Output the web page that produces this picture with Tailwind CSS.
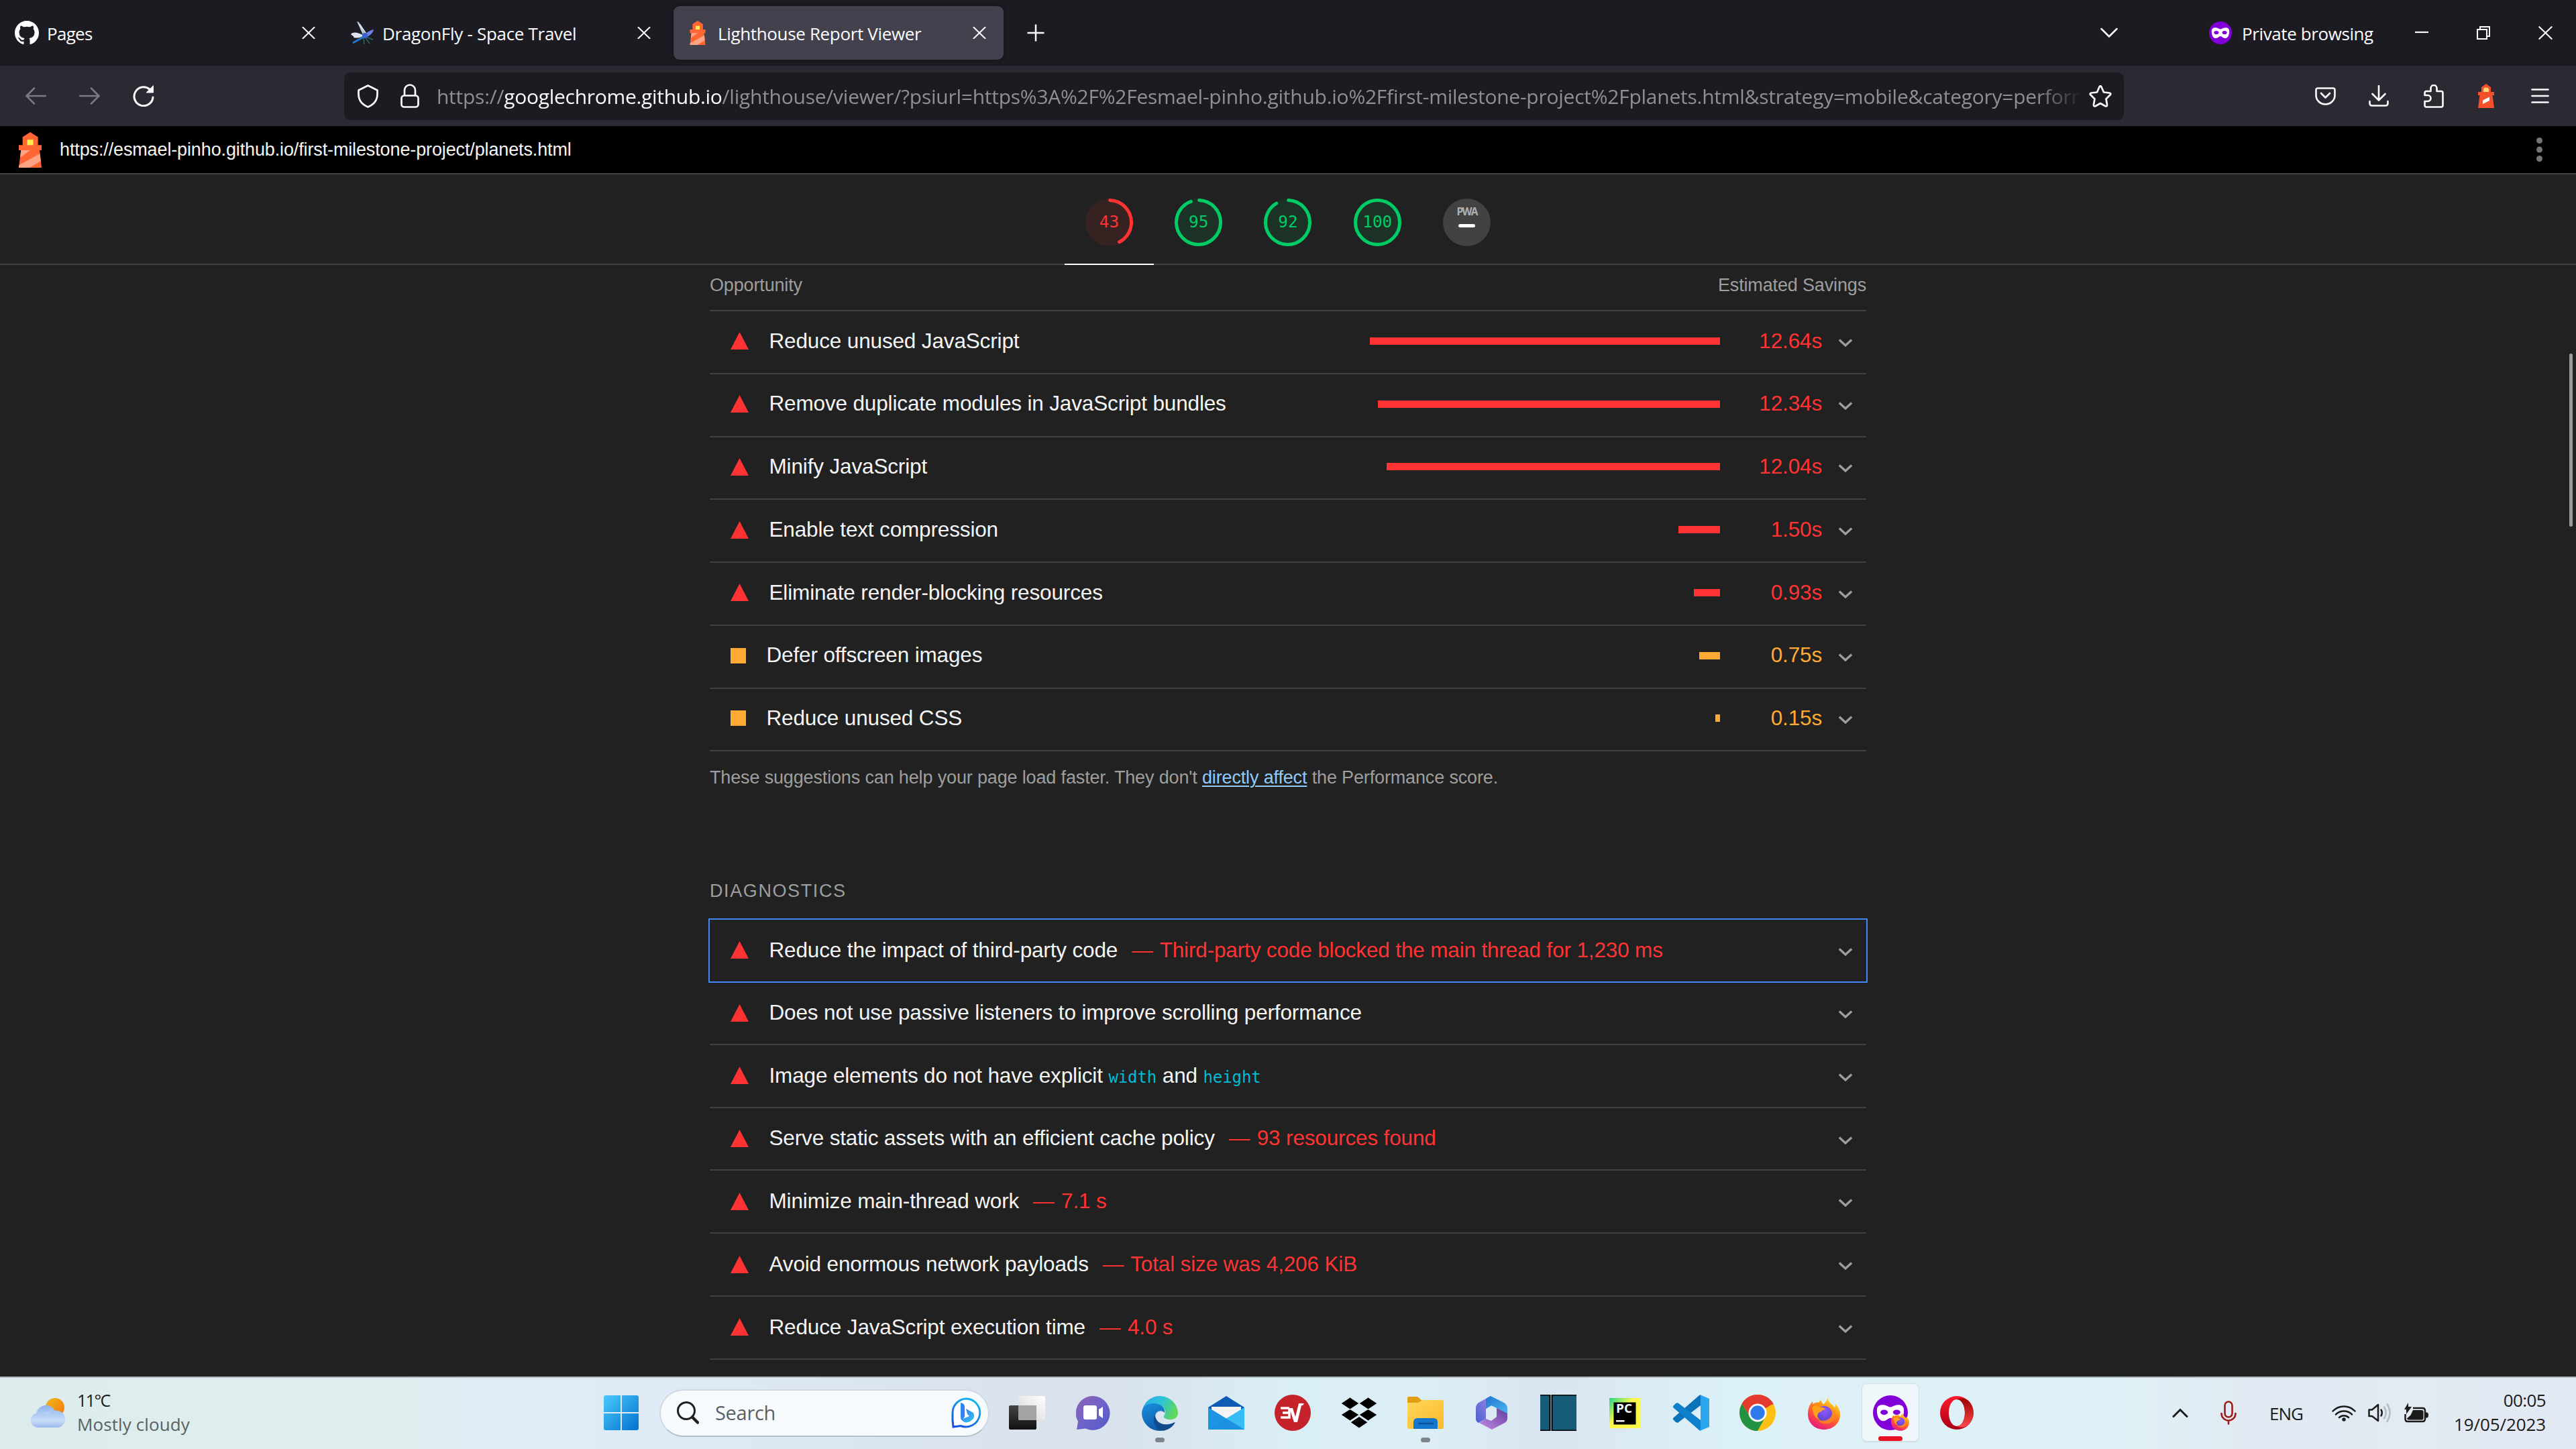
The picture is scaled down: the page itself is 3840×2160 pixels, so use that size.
<!DOCTYPE html>
<html lang="en">
<head>
<meta charset="utf-8">
<title>Lighthouse Report Viewer</title>
<script src="https://cdn.jsdelivr.net/npm/@tailwindcss/browser@4"></script>
</head>
<body class="w-[3840px] h-[2160px] overflow-hidden bg-[#212121] flex flex-col relative font-['Open_Sans',sans-serif]">

<svg class="absolute w-0 h-0">
  <defs>
    <symbol id="lighthouse" viewBox="0 0 34 53">
      <path fill="#ff6633" d="M17 0 28.6 7.3V19.3H34V27H31L34 53H0L3.3 27H0V19.3H5.7V7.3Z"/>
      <path fill="#ffa385" d="M3.3 27H17L2 38ZM31.6 32 32.8 43 16 53H0L.5 49Z"/>
      <path fill="#fff04d" d="M12.5 11.3H21.5V19.3H12.5Z"/>
    </symbol>
    <symbol id="x" viewBox="0 0 20 18"><path d="M1.5 .8 18.5 17.2M18.5 .8 1.5 17.2" stroke="#fbfbfe" stroke-width="2" stroke-linecap="round"/></symbol>
    <symbol id="mask" viewBox="0 0 40 40">
      <circle cx="20" cy="20" r="20" fill="#8000d7"/>
      <path fill="#fff" d="M4.5 17C4.500 12 8 10.500 12 11C16 11.300 17.500 13.500 20 13.500S24 11.300 28 11C32 10.500 35.500 12 35.500 17C35.500 24 33 29.500 28 29.500C24 29.500 23 26 20 26S16 29.500 12 29.500C7 29.500 4.500 24 4.500 17Z"/>
      <ellipse cx="12.800" cy="19.500" rx="4.200" ry="3" fill="#8000d7"/><ellipse cx="27.200" cy="19.500" rx="4.200" ry="3" fill="#8000d7"/>
    </symbol>
    <linearGradient id="ffbody" x1=".8" y1="0" x2=".25" y2="1"><stop offset="0" stop-color="#fff44f"/><stop offset=".35" stop-color="#ff980e"/><stop offset=".65" stop-color="#ff4f3c"/><stop offset="1" stop-color="#e31587"/></linearGradient>
    <radialGradient id="ffglobe" cx=".55" cy=".3" r=".8"><stop offset="0" stop-color="#9059ff"/><stop offset="1" stop-color="#5a3fc4"/></radialGradient>
    <symbol id="firefox" viewBox="0 0 48 49">
      <path fill="url(#ffbody)" d="M31 0C29 4 31 7 35 11C37 13 39 14 40 16C41 14 41 12 40.500 10.500C45 14 48 20 48 27C48 40 37 49 24 49S0 40 0 26C0 19 2 12 7 7C7 9 7 10 8 11C10 9 13 8 16 9C17 7 18 6 20 5C20 8 21 10 24 11C27 8 28 4 31 0Z"/>
      <circle cx="24.500" cy="25.500" r="11.500" fill="url(#ffglobe)"/>
      <path fill="#ffa11a" d="M7 15C11 12 15 13 18 16C21 15 24 17 26 18C24 20 21 20 20 22C18 23 16 23 15 26C13 29 15 32 18 34C13 33 9 29 8 24C7 21 6 18 7 15Z"/>
      <path fill="#ff8a1f" d="M16 34C24 38 34 34 36 26C37 20 34 16 31 14C38 17 42 24 40 32C37 40 26 43 18 38Z" opacity=".8"/>
    </symbol>
    <linearGradient id="winA" x1="0" y1="0" x2="1" y2="1"><stop offset="0" stop-color="#4cc9fb"/><stop offset="1" stop-color="#0172cf"/></linearGradient>
  </defs>
</svg>

<!-- Tab strip -->
<header class="h-[98px] shrink-0 bg-[#1c1b22] flex items-center pl-1 pr-[35px] text-[#fbfbfe] text-[26px] tracking-[-0.3px] leading-none">
  <div class="flex gap-2">
    <div class="w-[492px] h-20 flex items-center pl-[18px] pr-[26px]">
      <svg class="w-9 h-9" viewBox="0 0 16 16" fill="#fff"><path d="M8 0C3.580 0 0 3.580 0 8c0 3.540 2.290 6.530 5.470 7.590.4.070.55-.17.55-.38 0-.19-.01-.82-.01-1.490-2.010.37-2.530-.49-2.690-.94-.09-.23-.48-.94-.82-1.130-.28-.15-.68-.52-.01-.53.63-.01 1.080.58 1.230.82.72 1.210 1.870.87 2.330.66.07-.52.28-.87.51-1.070-1.780-.2-3.640-.89-3.640-3.950 0-.87.31-1.590.82-2.150-.08-.2-.36-1.020.08-2.120 0 0 .67-.21 2.200.82.64-.18 1.320-.27 2-.27s1.360.09 2 .27c1.530-1.040 2.200-.82 2.200-.82.44 1.100.16 1.920.08 2.120.51.56.82 1.270.82 2.150 0 3.070-1.870 3.750-3.650 3.950.29.25.54.73.54 1.480 0 1.070-.01 1.930-.01 2.200 0 .21.15.46.55.38A8.010 8.010 0 0 0 16 8c0-4.420-3.580-8-8-8"/></svg>
      <span class="ml-3 pt-[2px] grow tracking-[-0.7px]">Pages</span>
      <svg class="w-5 h-[18px]"><use href="#x"/></svg>
    </div>
    <div class="w-[492px] h-20 flex items-center pl-[18px] pr-[26px]">
      <svg class="w-9 h-9" viewBox="0 0 36 36" fill="none">
        <path d="M10 1 13 2 23 22 20 23Z" fill="#b9c9d6"/><path d="M14 5 24 20" stroke="#dfe9ef" stroke-width="2"/>
        <path d="M1 20C4 16 12 17 20 22C15 26 10 26 5 25C7 23 2 22 1 20Z" fill="#dce4f2"/>
        <path d="M19 23C23 18 30 14 35 13C34 19 28 23 22 25Z" fill="#6f7fe8"/>
        <path d="M20 24 4 33" stroke="#2277c8" stroke-width="3"/><path d="M22 24 29 34M20 25 21 35M24 24 34 28" stroke="#2b6a66" stroke-width="1.500"/>
        <circle cx="22" cy="22" r="4" fill="#3a63d0"/>
      </svg>
      <span class="ml-3 pt-[2px] grow">DragonFly - Space Travel</span>
      <svg class="w-5 h-[18px]"><use href="#x"/></svg>
    </div>
    <div class="w-[492px] h-20 flex items-center pl-[18px] pr-[26px] bg-[#42414d] rounded-[9px] shadow-[0_0_5px_rgba(0,0,0,0.5)]">
      <svg class="w-9 h-9"><use href="#lighthouse"/></svg>
      <span class="ml-3 pt-[2px] grow tracking-[-0.35px]">Lighthouse Report Viewer</span>
      <svg class="w-5 h-[18px]"><use href="#x"/></svg>
    </div>
  </div>
  <svg class="ml-[35px] w-[26px] h-[26px]" viewBox="0 0 26 26"><path d="M13 .5V25.500M.5 13H25.500" stroke="#fbfbfe" stroke-width="2.500"/></svg>
  <svg class="ml-auto w-[26px] h-4" viewBox="0 0 26 16"><path d="M1.500 2 13 13.500 24.500 2" fill="none" stroke="#fbfbfe" stroke-width="2.500" stroke-linecap="round"/></svg>
  <svg class="ml-[136px] w-[34px] h-[34px]"><use href="#mask"/></svg>
  <span class="ml-[15px] w-[200px] pt-[1px] tracking-[-0.4px] whitespace-nowrap">Private browsing</span>
  <svg class="ml-[58px] w-5 h-5" viewBox="0 0 20 20"><path d="M0 9H20" stroke="#fff" stroke-width="2.200"/></svg>
  <svg class="ml-[72px] w-5 h-5" viewBox="0 0 20 20" fill="none" stroke="#fff" stroke-width="2"><path d="M1 5H15V19H1ZM5 5V1H19V15H15"/></svg>
  <svg class="ml-[72px] w-[21px] h-5" viewBox="0 0 21 20"><path d="M.7 .5 20.300 19.500M20.300 .5 .7 19.500" stroke="#fff" stroke-width="2"/></svg>
</header>

<!-- Navigation toolbar -->
<div class="h-[90px] shrink-0 bg-[#2b2a33] flex items-center pl-[38px] pr-10">
  <svg class="w-[31px] h-[26px]" viewBox="0 0 31 26" fill="none" stroke="#7c7b82" stroke-width="2.500" stroke-linecap="round"><path d="M30 13H2M13 1.500 1.500 13 13 24.500"/></svg>
  <svg class="ml-[49px] w-[31px] h-[26px]" viewBox="0 0 31 26" fill="none" stroke="#7c7b82" stroke-width="2.500" stroke-linecap="round"><path d="M1 13H29M18 1.500 29.500 13 18 24.500"/></svg>
  <svg class="ml-[49px] w-8 h-8" viewBox="0 0 32 32" fill="none" stroke="#fbfbfe" stroke-width="3" stroke-linecap="round"><path d="M30 18A14 14 0 1 1 25 6L28 9"/><path d="M30.500 1V11H20.500Z" fill="#fbfbfe" stroke-width="1"/></svg>
  <div class="ml-[283px] w-[2654px] h-[71px] rounded-[9px] bg-[#1c1b22] flex items-center pl-5 pr-[18px]">
    <svg class="w-[31px] h-[35px]" viewBox="0 0 31 35" fill="none" stroke="#fbfbfe" stroke-width="2.700" stroke-linejoin="round"><path d="M15.500 1.500 29.500 8.500V14C29.500 23 24 30 15.500 33.500C7 30 1.500 23 1.500 14V8.500Z"/></svg>
    <svg class="ml-[33px] w-7 h-9" viewBox="0 0 28 36" fill="none" stroke="#fbfbfe" stroke-width="2.700"><rect x="1.500" y="17.500" width="25" height="17" rx="4"/><path d="M6 17V9.500A8 8 0 0 1 22 9.500V17"/></svg>
    <div class="ml-[26px] w-[2448px] overflow-hidden whitespace-nowrap text-[30px] leading-[44px] pt-[1px] tracking-[-0.25px] text-[#8f8f95] [mask-image:linear-gradient(to_right,black_2385px,transparent_2455px)]">https://<span class="text-[#fbfbfe] tracking-[-0.3px]">googlechrome.github.io</span>/lighthouse/viewer/?psiurl=https%3A%2F%2Fesmael-pinho.github.io%2Ffirst-milestone-project%2Fplanets.html&amp;strategy=mobile&amp;category=perform</div>
    <svg class="ml-auto w-[34px] h-[33px]" viewBox="0 0 34 33" fill="none" stroke="#fbfbfe" stroke-width="2.700" stroke-linejoin="round"><path d="M15.500 2.500Q17 0 18.500 2.500L22 10.500 30.500 11.500Q33.500 12.200 31.500 14.500L25.500 20.500 27 29Q27.300 32.500 24 31L17 27 10 31Q6.700 32.500 7 29L8.500 20.500 2.500 14.500Q.5 12.200 3.500 11.500L12 10.500Z"/></svg>
  </div>
  <svg class="ml-[285px] w-[31px] h-[27px]" viewBox="0 0 31 27" fill="none" stroke="#fbfbfe" stroke-width="2.600" stroke-linecap="round" stroke-linejoin="round"><path d="M4 1.500H27Q29.500 1.500 29.500 4V12A14 13.500 0 0 1 1.500 12V4Q1.500 1.500 4 1.500Z"/><path d="M9 9 15.500 15.500 22 9"/></svg>
  <svg class="ml-[49px] w-[30px] h-8" viewBox="0 0 30 32" fill="none" stroke="#fbfbfe" stroke-width="2.600" stroke-linecap="round" stroke-linejoin="round"><path d="M15 1V22M5.500 13 15 22.500 24.500 13M1.500 24V27Q1.500 30.500 5 30.500H25Q28.500 30.500 28.500 27V24"/></svg>
  <svg class="ml-[52px] w-[30px] h-[35px]" viewBox="0 0 30 35" fill="none" stroke="#fbfbfe" stroke-width="2.600" stroke-linejoin="round"><path d="M1.500 16V12.500Q1.500 10 4 10H10.500V5.500A4.500 4.500 0 0 1 19.500 5.500V10H26Q28.500 10 28.500 12.500V31Q28.500 33.500 26 33.500H4Q1.500 33.500 1.500 31V25H6A4.500 4.500 0 0 0 6 16Z"/></svg>
  <svg class="ml-[51px] w-6 h-9" viewBox="0 0 24 36"><path fill="#f4502a" d="M12 0 19 5V12H24V17H21.500L24 36H0L2.500 17H0V12H5V5Z"/><path fill="#ffd873" d="M8 12V9Q8 5.500 12 5.500T16 9V12Z"/><path fill="#fff" d="M7 24.500 17 19.500V25L7 30Z"/></svg>
  <svg class="ml-[55px] w-[27px] h-[22px]" viewBox="0 0 27 22" stroke="#fbfbfe" stroke-width="2.600" stroke-linecap="round"><path d="M1.500 1.500H25.500M1.500 11H25.500M1.500 20.500H25.500"/></svg>
</div>

<!-- Report top bar -->
<div class="h-[72px] shrink-0 bg-black border-b-2 border-[#424242] flex items-center pl-7 pr-[50px] font-['Liberation_Sans',sans-serif]">
  <svg class="w-[34px] h-[53px]"><use href="#lighthouse"/></svg>
  <span class="ml-[27px] text-[27px] tracking-[-0.13px] text-[#f5f5f5] leading-none">https://esmael-pinho.github.io/first-milestone-project/planets.html</span>
  <svg class="ml-auto w-[9px] h-9" viewBox="0 0 9 36" fill="#757575"><circle cx="4.500" cy="4.500" r="4.500"/><circle cx="4.500" cy="18" r="4.500"/><circle cx="4.500" cy="31.500" r="4.500"/></svg>
</div>

<!-- Category gauges -->
<nav class="h-[135px] shrink-0 border-b-2 border-[#424242] flex justify-center">
  <div id="gauges" class="flex font-['DejaVu_Sans_Mono',monospace] text-[24.4px] leading-none"></div>
</nav>

<main class="w-[1724px] mx-auto shrink-0 h-[1657px] overflow-visible font-['Liberation_Sans',sans-serif] text-[31.5px] tracking-[-0.15px] leading-none text-[#f5f5f5]">
  <div class="h-[69px] border-b-2 border-[#424242] flex items-center justify-between pb-[6px] text-[27px] text-[#9e9e9e]">
    <span>Opportunity</span><span>Estimated Savings</span>
  </div>
  <div id="opportunities"></div>
  <p class="h-[79px] flex items-center whitespace-pre text-[27px] text-[#9e9e9e]">These suggestions can help your page load faster. They don't <a class="text-[#90caf9] underline decoration-2 underline-offset-[3px]">directly affect</a> the Performance score.</p>
  <h2 class="mt-[86.3px] h-[85.4px] flex items-center text-[27px] tracking-[1.6px] text-[#9e9e9e]">DIAGNOSTICS</h2>
  <div id="diagnostics"></div>
</main>

<div class="absolute right-[5px] top-[527px] w-[5px] h-[258px] rounded-full bg-[#9a9a9a]"></div>

<!-- Taskbar -->
<footer class="absolute left-0 top-[2052px] w-full h-[108px] border-t-2 border-[#b3bcc2] pb-[2px] flex items-center text-[#1b1b1b] text-[26px] leading-9 bg-[linear-gradient(90deg,#dcecec_0%,#e1eeee_15%,#dfecf6_19%,#deeaf5_26%,#d9e2ed_40%,#d9e3ed_44%,#daeef5_50%,#dceef6_55%,#d9e5f0_60%,#dcf0f7_67%,#def1f6_82%,#e1eaf2_87%,#e2e9f2_100%)]">
  <div class="w-[900px] shrink-0 pl-11 flex items-center">
    <svg class="w-[54px] h-11" viewBox="0 0 54 44">
      <defs><linearGradient id="sun" x1="0" y1="0" x2="1" y2="1"><stop offset="0" stop-color="#f0b81c"/><stop offset="1" stop-color="#f8760f"/></linearGradient><linearGradient id="cl" x1="0" y1="0" x2="0" y2="1"><stop offset="0" stop-color="#8fb4ee"/><stop offset=".7" stop-color="#c8dcf5"/><stop offset="1" stop-color="#9bb9ee"/></linearGradient></defs>
      <circle cx="38" cy="14" r="14" fill="url(#sun)"/>
      <path fill="url(#cl)" d="M11 44A11 11 0 0 1 10 22.500A15 15 0 0 1 38 19A12.500 12.500 0 0 1 43 44Z"/>
      <path d="M12 22A11 11 0 0 1 26 28A14 14 0 0 1 37 19" fill="#b6cdf5" opacity=".8"/>
    </svg>
    <div class="ml-[17px] pb-[3px] flex flex-col">
      <span class="text-[25px] tracking-[-1.6px]">11°C</span>
      <span class="text-[#5b6063] tracking-[0.1px]">Mostly cloudy</span>
    </div>
  </div>
  <svg class="w-[52px] h-[52px] shrink-0" viewBox="0 0 52 52"><path fill="url(#winA)" d="M3 0H25V25H0V3Q0 0 3 0ZM27 0H49Q52 0 52 3V25H27ZM0 27H25V52H3Q0 52 0 49ZM27 27H52V49Q52 52 49 52H27Z"/></svg>
  <div class="ml-[31px] w-[492px] h-[71px] shrink-0 rounded-full border-2 border-[#cfd8e3] border-b-[#b4bfc9] bg-[#f6fafd] flex items-center pl-[23px] pr-[9px]">
    <svg class="w-[34px] h-[34px]" viewBox="0 0 34 34" fill="none" stroke="#202020" stroke-linecap="round"><circle cx="15" cy="14" r="12.500" stroke-width="3"/><path d="M24 23.500 32 31.500" stroke-width="4.500"/></svg>
    <span class="ml-6 text-[29px] tracking-[-0.3px] text-[#5c5f63]">Search</span>
    <svg class="ml-auto w-[46px] h-[46px]" viewBox="0 0 46 46"><defs><linearGradient id="bg1" x1="0" y1="1" x2=".6" y2="0"><stop offset="0" stop-color="#174ae4"/><stop offset="1" stop-color="#18b5e8"/></linearGradient><linearGradient id="bg2" x1="0" y1="0" x2="1" y2="1"><stop offset="0" stop-color="#2d7bf0"/><stop offset="1" stop-color="#35c6f0"/></linearGradient></defs>
      <path d="M23 2A21 21 0 1 1 14 42.500L3 44 2 34V23A21 21 0 0 1 23 2Z" fill="#fff" stroke="url(#bg1)" stroke-width="3"/><path d="M14 8Q20 9 20 14V29L16 34Q14 33 14 30Z" fill="#2d86ee"/><path d="M22 17 33 23Q37 31 28 36Q20 40 15 33L27 28 24 25Z" fill="url(#bg2)"/></svg>
  </div>
  <div class="ml-[6px] flex shrink-0" id="apps">
    <div class="w-[99px] h-[106px] flex items-center justify-center"><svg class="w-[54px] h-[50px]" viewBox="0 0 54 50"><defs><linearGradient id="tv"  x1="0" y1="0" x2="0" y2="1"><stop offset="0" stop-color="#444"/><stop offset="1" stop-color="#111"/></linearGradient><linearGradient id="tv2" x1="1" y1="0" x2="0" y2="1"><stop offset="0" stop-color="#fff"/><stop offset="1" stop-color="#d4d4d4"/></linearGradient></defs><rect y="14" width="41" height="36" rx="2" fill="url(#tv)"/><rect x="14" width="40" height="36" rx="2" fill="url(#tv2)"/><path d="M14 14H41V36H16Q14 36 14 34Z" fill="#a3a3a3"/></svg></div>
    <div class="w-[99px] h-[106px] flex items-center justify-center"><svg class="w-[51px] h-[51px]" viewBox="0 0 51 51"><defs><linearGradient id="ch" x1="0" y1="0" x2="1" y2="1"><stop offset="0" stop-color="#8f63b5"/><stop offset=".5" stop-color="#6f63c8"/><stop offset="1" stop-color="#5059c9"/></linearGradient></defs><path fill="url(#ch)" d="M25.500 0A25.500 25.500 0 1 1 14 48.500L1 50 3 38A25.500 25.500 0 0 1 25.500 0Z"/><rect x="11" y="14" width="20" height="21" rx="3" fill="#fff"/><path fill="#fff" d="M34 20 40 16V33L34 29Z"/></svg></div>
    <div class="w-[99px] h-[106px] flex items-center justify-center relative"><svg class="w-[54px] h-[54px]" viewBox="0 0 54 54"><defs><linearGradient id="e1" x1="0" y1=".2" x2="1" y2=".5"><stop offset="0" stop-color="#2aa8e8"/><stop offset=".5" stop-color="#2cc4d8"/><stop offset="1" stop-color="#62d957"/></linearGradient><linearGradient id="e2" x1="0" y1="0" x2=".5" y2="1"><stop offset="0" stop-color="#1a8fe0"/><stop offset="1" stop-color="#0c59a4"/></linearGradient></defs>
      <path fill="url(#e1)" d="M1 22A27 27 0 0 1 54 27C54 35 47 38 40 37C34 36 31 34 34 30C37 24 32 14 20 14C10 14 4 18 1 22Z"/><path fill="url(#e2)" d="M0 28C0 18 8 13 18 13C28 13 35 19 34 27C30 22 20 24 20 33C20 43 34 49 49 41C44 50 36 54 27 54A27 27 0 0 1 0 28Z"/><path fill="#114a8b" d="M20 30C14 40 22 54 33 53.500C41 52 47 47 50 41C36 49 20 43 20 30Z"/></svg><i class="absolute bottom-[9px] w-[14px] h-[7px] rounded-full bg-[#7d8489]"></i></div>
    <div class="w-[99px] h-[106px] flex items-center justify-center"><svg class="w-[54px] h-[50px]" viewBox="0 0 54 50"><path fill="#0d5bb5" d="M0 17 27 0 54 17V30H0Z"/><path fill="#f4f4f6" d="M5 16H49V32H5Z"/><path fill="#1e95e4" d="M0 17 54 50H0Z"/><path fill="#37bdf4" d="M54 17 0 50H54Z"/><path fill="#1c91e2" d="M27 33.500 54 50H0Z"/></svg></div>
    <div class="w-[99px] h-[106px] flex items-center justify-center"><svg class="w-[54px] h-[54px]" viewBox="0 0 54 54"><circle cx="27" cy="27" r="27" fill="#c4232b"/><path d="M9 20H22M12 27H22M9 34H22V20" fill="none" stroke="#fff" stroke-width="3.500"/><path d="M22 20H27L31 33 36 13H44L42 16H40L34 41H29Z" fill="#fff"/></svg></div>
    <div class="w-[99px] h-[106px] flex items-center justify-center"><svg class="w-[54px] h-[46px]" viewBox="0 0 54 46"><path d="M13.500 0 27 9 13.500 18 0 9ZM40.500 0 54 9 40.500 18 27 9ZM13.500 17.500 27 26 13.500 35 0 26ZM40.500 17.500 54 26 40.500 35 27 26ZM27 28.500 40 37.200 27 46 14 37.200Z" stroke="#dbeef5" stroke-width="1"/></svg></div>
    <div class="w-[99px] h-[106px] flex items-center justify-center relative"><svg class="w-[54px] h-12" viewBox="0 0 54 48"><defs><linearGradient id="fo" x1="0" y1="0" x2="1" y2="1"><stop offset="0" stop-color="#ffd75e"/><stop offset="1" stop-color="#fbb827"/></linearGradient></defs><path fill="#e09e10" d="M2 0H15L22 6V14H0V2Q0 0 2 0Z"/><path fill="url(#fo)" d="M22 5H52Q54 5 54 7V46Q54 48 52 48H2Q0 48 0 46V9H16Z"/><path fill="#1477cd" d="M9 48V38Q9 32 15 32H39Q45 32 45 38V48Z"/><path d="M17 40H38" stroke="#0b4f96" stroke-width="2.500" stroke-linecap="round"/></svg><i class="absolute bottom-[9px] w-[14px] h-[7px] rounded-full bg-[#7d8489]"></i></div>
    <div class="w-[99px] h-[106px] flex items-center justify-center"><svg class="w-[47px] h-[50px]" viewBox="0 0 47 50"><defs><linearGradient id="o1" x1="0" y1="1" x2="1" y2="0"><stop offset="0" stop-color="#4a5fd0"/><stop offset="1" stop-color="#a08be6"/></linearGradient><linearGradient id="o2" x1="0" y1="0" x2="1" y2="1"><stop offset="0" stop-color="#1e76d2"/><stop offset="1" stop-color="#4fb4ee"/></linearGradient><linearGradient id="o3" x1="0" y1="1" x2="1" y2="0"><stop offset="0" stop-color="#c78ae6"/><stop offset="1" stop-color="#5f3e9c"/></linearGradient></defs>
      <path fill="url(#o1)" d="M22 0 4 10Q0 13 0 18V34Q0 38 4 40L15 34V19L23 14Z"/><path fill="url(#o2)" d="M22 0 42 10Q47 13 47 18V27L31 18 23 14 15 19V4Z"/><path fill="url(#o3)" d="M47 26V33Q47 38 43 40L24 50 5 40 15 34 23 37 31 31V18Z"/></svg></div>
    <div class="w-[99px] h-[106px] flex items-center justify-center"><svg class="w-[54px] h-[54px]" viewBox="0 0 54 54"><rect width="54" height="54" fill="#000"/><path fill="#165c79" d="M0 1.500H13.500V52.500H0ZM18.500 1.500H54V52.500H18.500Z"/><path d="M16 0V54" stroke="#dfe9ee" stroke-width="1"/></svg></div>
    <div class="w-[99px] h-[106px] flex items-center justify-center"><svg class="w-[46px] h-[45px]" viewBox="0 0 46 45"><defs><linearGradient id="pc" x1="0" y1="0" x2=".45" y2=".4"><stop offset="0" stop-color="#21d789"/><stop offset="1" stop-color="#fcf84a"/></linearGradient></defs><rect width="46" height="45" fill="url(#pc)"/><rect x="6.500" y="6.500" width="33" height="33" fill="#000"/><text x="10" y="22" fill="#fff" font-family="Open Sans" font-weight="700" font-size="17" textLength="24" lengthAdjust="spacingAndGlyphs">PC</text><rect x="10" y="33" width="12.500" height="2.500" fill="#fff"/></svg></div>
    <div class="w-[99px] h-[106px] flex items-center justify-center"><svg class="w-[54px] h-[54px]" viewBox="0 0 54 54"><path fill="#0a72ba" d="M41 0V16L7 42 4 41 0 37V35L39 1Z"/><path fill="#0f80cc" d="M41 54V38L7 12 4 13 0 17V19L39 53Z"/><path fill="#2aa6ee" d="M40 0 54 6V48L40 54Q41 53 41 50V4Q41 1 40 0Z"/></svg></div>
    <div class="w-[99px] h-[106px] flex items-center justify-center"><svg class="w-[54px] h-[54px]" viewBox="0 0 54 54"><circle cx="27" cy="27" r="27" fill="#fdbf11"/><path fill="#e33b2e" d="M27 27 3.600 13.500A27 27 0 0 1 50.400 13.500Z"/><path fill="#e33b2e" d="M27 14.500H51A27 27 0 0 0 3.600 13.500L16 33Z"/><path fill="#229342" d="M3.600 13.500A27 27 0 0 0 27 54L38.500 33.500 27 39 16 33Z"/><circle cx="27" cy="27" r="13.500" fill="#fff"/><circle cx="27" cy="27" r="10.700" fill="#2f7bee"/></svg></div>
    <div class="w-[99px] h-[106px] flex items-center justify-center"><svg class="w-12 h-[49px]"><use href="#firefox"/></svg></div>
    <div class="w-[99px] h-[106px] flex items-center justify-center relative"><div class="w-[86px] h-[88px] rounded-lg bg-[#f0f7fb] border border-b-2 border-[#d3dde4] flex items-center justify-center relative">
      <svg class="w-[52px] h-[52px]"><use href="#mask"/></svg>
      <svg class="absolute right-[14px] bottom-[15px] w-[27px] h-7"><use href="#firefox"/></svg>
      <i class="absolute bottom-0 w-9 h-[7px] rounded-full bg-[#e81123]"></i></div></div>
    <div class="w-[99px] h-[106px] flex items-center justify-center"><svg class="w-[50px] h-[50px]" viewBox="0 0 50 50"><defs><linearGradient id="op" x1="0" y1="0" x2="0" y2="1"><stop offset="0" stop-color="#ff1b2d"/><stop offset="1" stop-color="#a70014"/></linearGradient><linearGradient id="op2" x1="0" y1="0" x2="0" y2="1"><stop offset="0" stop-color="#9c0000"/><stop offset="1" stop-color="#ff4b4b"/></linearGradient></defs><path fill="url(#op)" fill-rule="evenodd" d="M25 0A25 25 0 1 0 25 50A25 25 0 1 0 25 0ZM25 5C32 5 37 14 37 25S32 45 25 45S13 36 13 25S18 5 25 5Z"/><path fill="url(#op2)" d="M25 5Q32 1 41 6A25 25 0 0 1 41 44Q33 49 25 45C32 45 37 36 37 25S32 5 25 5Z"/></svg></div>
  </div>
  <div class="ml-auto pr-[45px] flex items-center shrink-0">
    <svg class="w-6 h-[14px]" viewBox="0 0 24 14"><path d="M2 12.500 12 2.500 22 12.500" fill="none" stroke="#1b1b1b" stroke-width="3" stroke-linecap="round"/></svg>
    <svg class="ml-12 w-6 h-9" viewBox="0 0 24 36" fill="none" stroke="#9c1c1c" stroke-width="2.600" stroke-linecap="round"><rect x="6.500" y="1.500" width="11" height="23" rx="5.500"/><path d="M1.500 19A10.500 10.500 0 0 0 22.500 19M12 30V34.500"/></svg>
    <span class="ml-[49px] w-[51px] tracking-[-1px] pt-[1px]">ENG</span>
    <svg class="ml-[42px] w-9 h-[26px]" viewBox="0 0 36 26" fill="none" stroke="#1b1b1b" stroke-width="2.500" stroke-linecap="round"><path d="M1.500 10.500A23 23 0 0 1 34.500 10.500M6 15.500A17 17 0 0 1 30 15.500M11 20A10 10 0 0 1 25 20"/><circle cx="18" cy="23" r="2" fill="#1b1b1b" stroke-width="1.500"/></svg>
    <svg class="ml-[18px] w-9 h-[30px]" viewBox="0 0 36 30" fill="none" stroke="#1b1b1b" stroke-width="2.500" stroke-linecap="round" stroke-linejoin="round"><path d="M1.500 10.500H6L15 3V27L6 20H1.500Z"/><path d="M19.500 10.500Q22 15 19.500 19.500"/><path d="M24 6.500Q29.500 15 24 23.500M28.500 2Q36.500 15 28.500 28" stroke="#b6bcc6"/></svg>
    <svg class="ml-[18px] w-9 h-[30px]" viewBox="0 0 36 30"><path d="M13 8H27Q31 8 31 12V24Q31 28 27 28H5Q1.500 28 1.500 24V17" fill="none" stroke="#1b1b1b" stroke-width="2.500"/><path fill="#1b1b1b" d="M13 11H26Q28.500 11 28.500 13.500V23Q28.500 25.500 26 25.500H6.500Q4 25.500 4 23.500L9.500 18.500ZM32 14.500H34Q36 15 36 18.500T34 22.500H32ZM6 0V6H11L3 17V10H0Z"/></svg>
    <div class="ml-[37px] w-[138px] pb-[3px] flex flex-col items-end"><span class="tracking-[-0.6px]">00:05</span><span class="tracking-[-0.1px]">19/05/2023</span></div>
  </div>
</footer>

<script>
const RED = "#ff3333", ORANGE = "#ffaa33", GREEN = "#00cc66";
const chevron = `<svg class="w-[22px] h-3 shrink-0 mt-[5px]" viewBox="0 0 22 12"><path d="M1.800 1.500 11 10 20.200 1.500" fill="none" stroke="#9e9e9e" stroke-width="3.300"/></svg>`;
const triangle = `<svg class="w-[27px] h-[26px] shrink-0" viewBox="0 0 27 26"><path d="M13.500 0 27 26H0Z" fill="${RED}"/></svg>`;
const square = `<span class="w-[23px] h-[23px] shrink-0 bg-[#ffaa33]"></span>`;

// score gauges: arc length follows the score
const gauges = [[43, RED], [95, GREEN], [92, GREEN], [100, GREEN]];
const C = 2 * Math.PI * 33;
document.getElementById("gauges").innerHTML = gauges.map(([s, c], i) => `
  <div class="w-[133.300px] h-[135px] flex items-center justify-center pt-[10px] ${i === 0 ? "border-b-2 border-white" : "pb-[2px]"}">
    <div class="relative w-[71px] h-[71px] flex items-center justify-center">
      <svg class="absolute inset-0 w-[71px] h-[71px]" viewBox="0 0 71 71"><circle cx="35.500" cy="35.500" r="35.500" fill="${c}" opacity=".1"/><circle cx="35.500" cy="35.500" r="33" fill="none" stroke="${c}" stroke-width="5" stroke-linecap="round" stroke-dasharray="${s === 100 ? C : s / 100 * C - 2.500} ${C}" transform="rotate(${s === 100 ? -90 : -88} 35.500 35.500)"/></svg>
      <span class="relative" style="color:${c}">${s}</span>
    </div>
  </div>`).join("") + `
  <div class="w-[133.300px] h-[135px] flex items-center justify-center pt-[10px] pb-[2px]">
    <div class="w-[71px] h-[71px] rounded-full bg-[#424242] flex flex-col items-center pt-[12px]">
      <span class="font-['Open_Sans',sans-serif] font-bold text-[15.5px] leading-[14px] tracking-[-1.800px] text-[#b0b0b0]">PWA</span>
      <span class="mt-[12px] w-[25px] h-[5px] rounded-full bg-white"></span>
    </div>
  </div>`;

// savings bars share one scale
const opportunities = [["Reduce unused JavaScript", 12.64, 522], ["Remove duplicate modules in JavaScript bundles", 12.34, 510], ["Minify JavaScript", 12.04, 497], ["Enable text compression", 1.5, 62], ["Eliminate render-blocking resources", 0.93, 39], ["Defer offscreen images", 0.75, 31], ["Reduce unused CSS", 0.15, 7]];
document.getElementById("opportunities").innerHTML = opportunities.map(([t, s, w]) => {
  const c = s > 0.8 ? RED : ORANGE;
  return `<div class="h-[93.750px] border-b-2 border-[#424242] flex items-center pl-[31px] pr-5 pb-[3px]">
    ${s > 0.8 ? triangle : square}<span class="ml-[30.500px] grow">${t}</span>
    <span class="h-[11px]" style="width:${w}px;background:${c}"></span>
    <span class="w-[152px] text-right" style="color:${c}">${s.toFixed(2)}s</span>
    <span class="ml-[24px] flex">${chevron}</span></div>`;
}).join("");

const diagnostics = [["Reduce the impact of third-party code", "Third-party code blocked the main thread for 1,230 ms"], ["Does not use passive listeners to improve scrolling performance"], [`Image elements do not have explicit <code class="font-['DejaVu_Sans_Mono',monospace] text-[24.100px] text-[#00bcd4]">width</code> and <code class="font-['DejaVu_Sans_Mono',monospace] text-[24.100px] text-[#00bcd4]">height</code>`], ["Serve static assets with an efficient cache policy", "93 resources found"], ["Minimize main-thread work", "7.1 s"], ["Avoid enormous network payloads", "Total size was 4,206 KiB"], ["Reduce JavaScript execution time", "4.0 s"]];
document.getElementById("diagnostics").innerHTML = diagnostics.map(([t, d], i) => `
  <div class="${i === 0 ? "h-[92px] mb-[1.250px] outline-2 outline-[#4285f4]" : "h-[93.750px] border-b-2 border-[#424242]"} flex items-center pl-[31px] pr-5 pb-[1px]">
    ${triangle}<span class="ml-[30.500px]">${t}</span>${d ? `<span class="ml-[21px] text-[#ff3333]"><span class="mr-[2px]">—</span> ${d}</span>` : ""}
    <span class="ml-auto flex">${chevron}</span></div>`).join("");
</script>
</body>
</html>
